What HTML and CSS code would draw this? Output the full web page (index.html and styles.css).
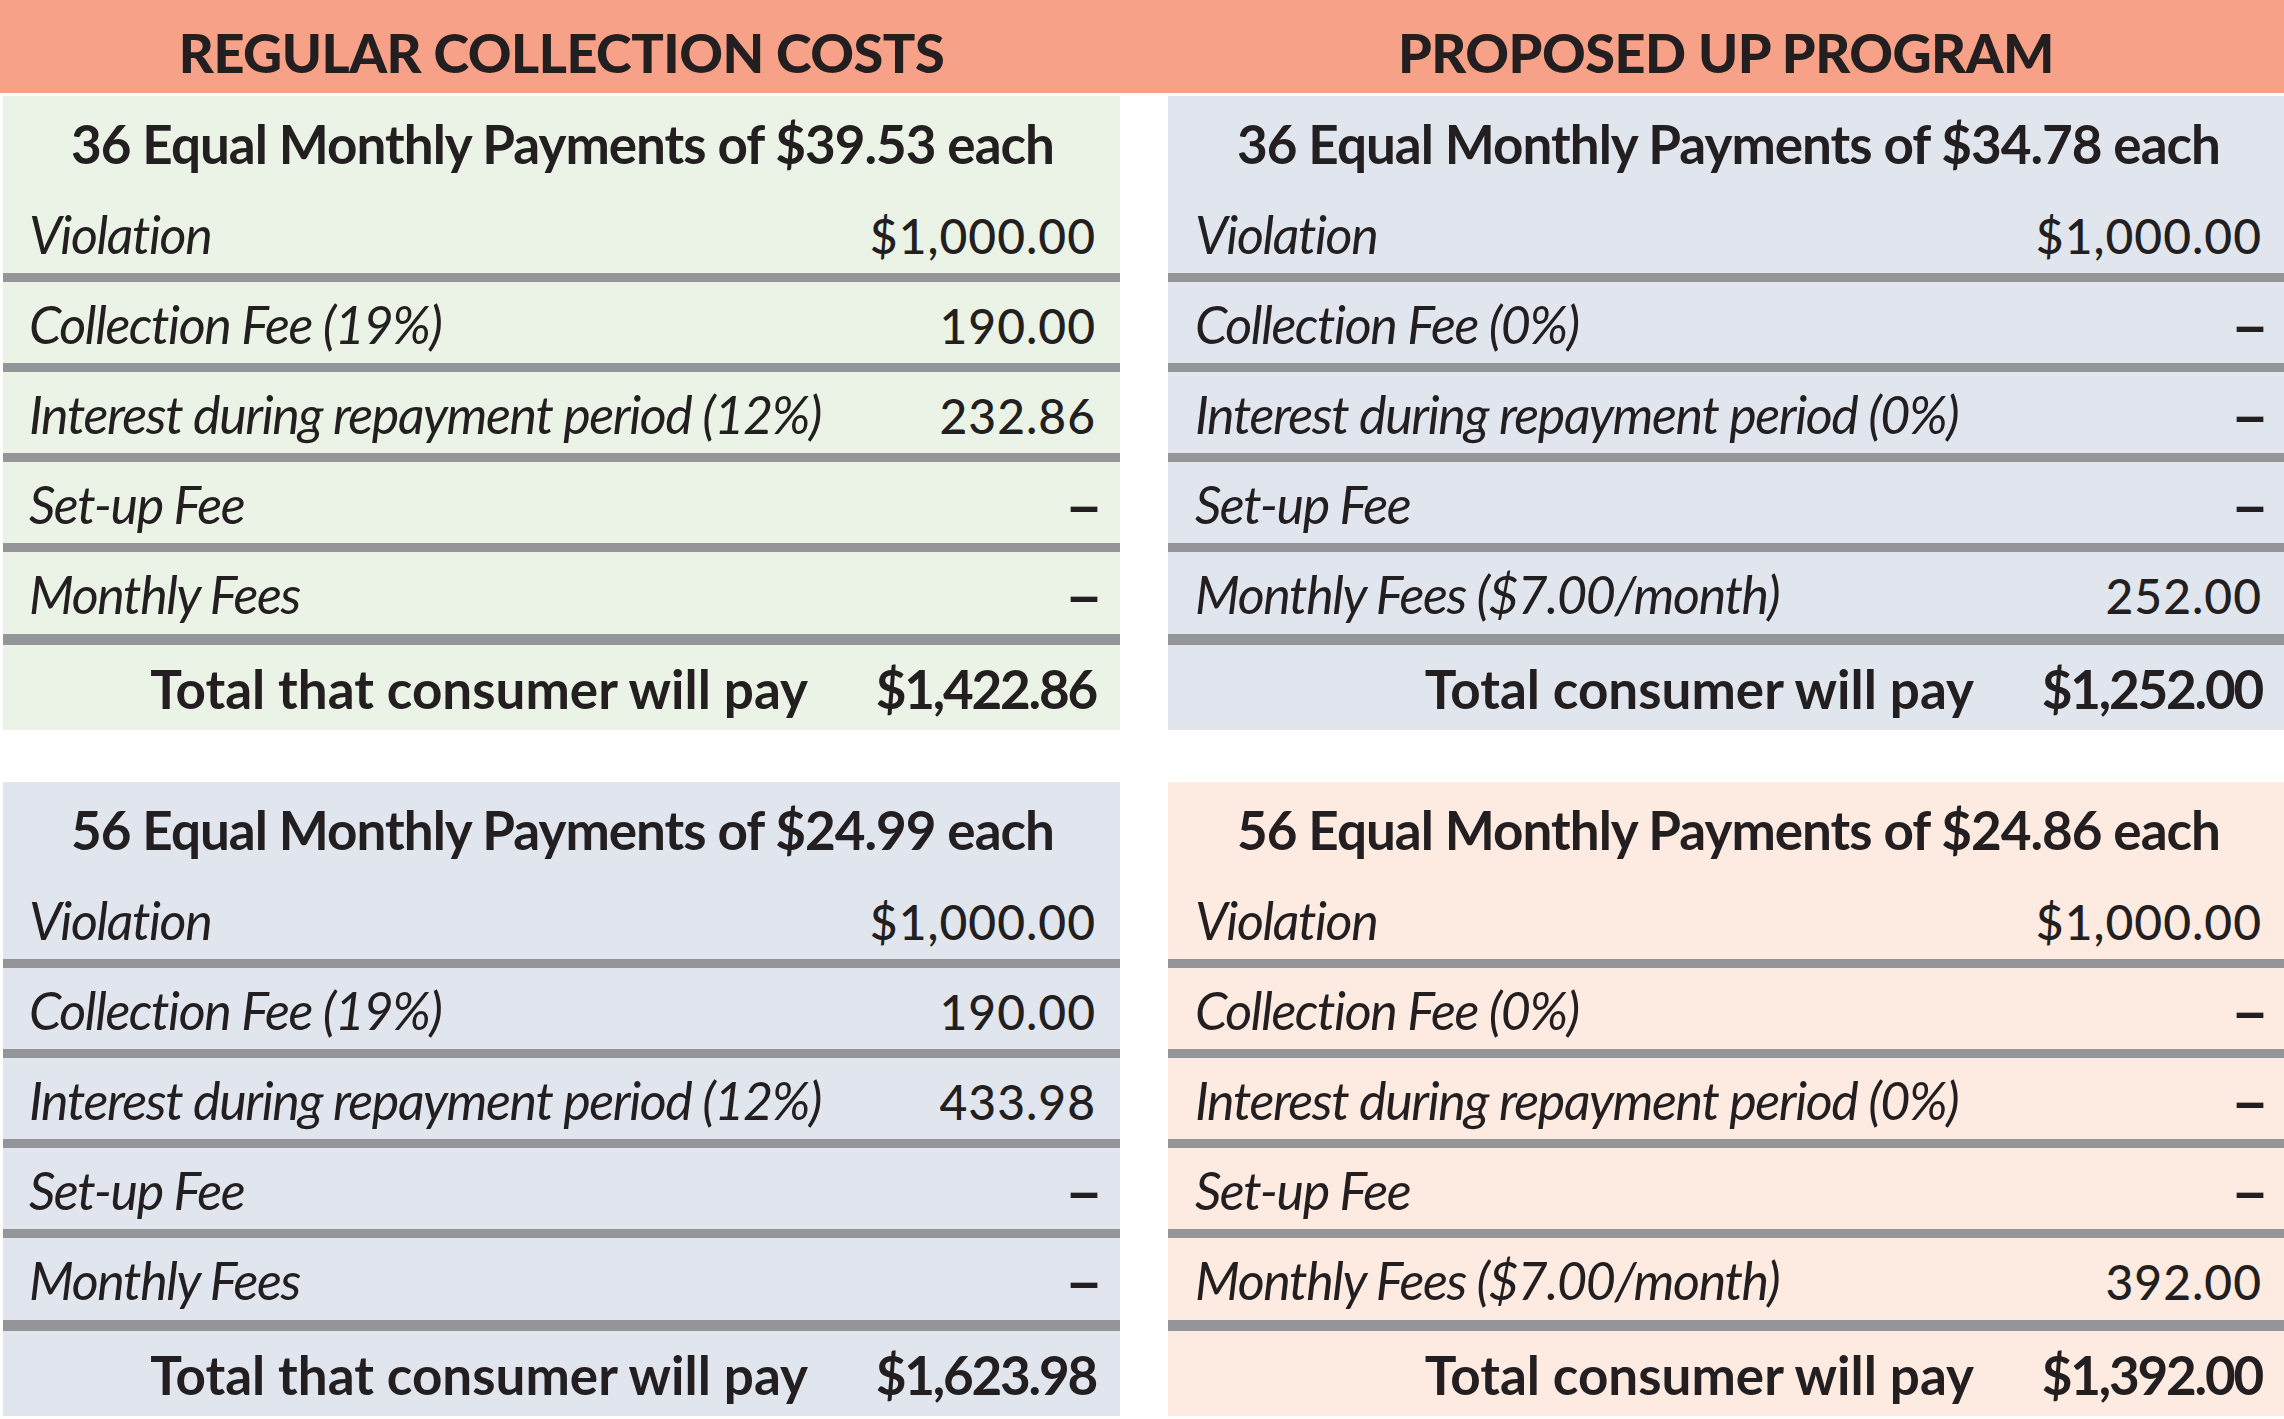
FILE: index.html
```html
<!DOCTYPE html>
<html lang="en">
<head>
<meta charset="utf-8">
<title>Collection Costs Comparison</title>
<link rel="stylesheet" href="styles.css">
</head>
<body>
<header class="head">
  <div class="head-inner">
    <h1 class="head-title">REGULAR COLLECTION COSTS</h1>
    <h1 class="head-title">PROPOSED UP PROGRAM</h1>
  </div>
</header>
<main class="grid">
  <section class="panel green">
    <h2 class="title">36 Equal Monthly Payments of $39.53 each</h2>
    <div class="row"><span class="label">Violation</span><span class="val">$1,000.00</span></div>
    <div class="row"><span class="label">Collection Fee (19%)</span><span class="val">190.00</span></div>
    <div class="row"><span class="label">Interest during repayment period (12%)</span><span class="val">232.86</span></div>
    <div class="row"><span class="label">Set-up Fee</span><span class="val dash">–</span></div>
    <div class="row last"><span class="label">Monthly Fees</span><span class="val dash">–</span></div>
    <div class="total"><span class="tlabel">Total that consumer will pay</span><span class="tval">$1,422.86</span></div>
  </section>
  <section class="panel blue right">
    <h2 class="title">36 Equal Monthly Payments of $34.78 each</h2>
    <div class="row"><span class="label">Violation</span><span class="val">$1,000.00</span></div>
    <div class="row"><span class="label">Collection Fee (0%)</span><span class="val dash">–</span></div>
    <div class="row"><span class="label">Interest during repayment period (0%)</span><span class="val dash">–</span></div>
    <div class="row"><span class="label">Set-up Fee</span><span class="val dash">–</span></div>
    <div class="row last"><span class="label">Monthly Fees ($7.00/month)</span><span class="val">252.00</span></div>
    <div class="total"><span class="tlabel">Total consumer will pay</span><span class="tval">$1,252.00</span></div>
  </section>
  <section class="panel blue">
    <h2 class="title">56 Equal Monthly Payments of $24.99 each</h2>
    <div class="row"><span class="label">Violation</span><span class="val">$1,000.00</span></div>
    <div class="row"><span class="label">Collection Fee (19%)</span><span class="val">190.00</span></div>
    <div class="row"><span class="label">Interest during repayment period (12%)</span><span class="val">433.98</span></div>
    <div class="row"><span class="label">Set-up Fee</span><span class="val dash">–</span></div>
    <div class="row last"><span class="label">Monthly Fees</span><span class="val dash">–</span></div>
    <div class="total"><span class="tlabel">Total that consumer will pay</span><span class="tval">$1,623.98</span></div>
  </section>
  <section class="panel peach right">
    <h2 class="title">56 Equal Monthly Payments of $24.86 each</h2>
    <div class="row"><span class="label">Violation</span><span class="val">$1,000.00</span></div>
    <div class="row"><span class="label">Collection Fee (0%)</span><span class="val dash">–</span></div>
    <div class="row"><span class="label">Interest during repayment period (0%)</span><span class="val dash">–</span></div>
    <div class="row"><span class="label">Set-up Fee</span><span class="val dash">–</span></div>
    <div class="row last"><span class="label">Monthly Fees ($7.00/month)</span><span class="val">392.00</span></div>
    <div class="total"><span class="tlabel">Total consumer will pay</span><span class="tval">$1,392.00</span></div>
  </section>
</main>
</body>
</html>
```

FILE: styles.css
```css
* { box-sizing: border-box; }
html, body { margin: 0; padding: 0; background: #ffffff; }
body { font-family: Lato, "Liberation Sans", sans-serif; color: #231f20; width: 2284px; height: 1419px; overflow: hidden; }

.head { background: #f7a288; height: 93px; }
.head-inner { display: grid; grid-template-columns: 1117px 1fr; column-gap: 48px; padding-left: 3px; }
.head-title { margin: 0; text-align: center; font-weight: 900; font-size: 54px; line-height: 80px; padding-top: 13px; letter-spacing: -0.5px; }

.grid { display: grid; grid-template-columns: 1117px 1fr; column-gap: 48px; row-gap: 52px; padding-left: 3px; padding-top: 3px; }

.panel { height: 634px; padding: 0 24px 0 26px; }
.panel.right { padding: 0 22px 0 27px; }
.green { background: #ebf3e6; }
.blue { background: #e0e5ee; }
.peach { background: #fdeae0; }

.title { margin: 0; height: 96px; line-height: 96px; text-align: center; font-weight: 700; font-size: 53px; letter-spacing: -1px; white-space: nowrap; }

.row { display: flex; justify-content: space-between; align-items: baseline; height: 90px; border-bottom: 9px solid #939598; margin: 0 -24px 0 -26px; padding: 4px 24px 0 26px; line-height: 77px; }
.right .row { margin: 0 -22px 0 -27px; padding: 4px 22px 0 27px; }
.row.last { height: 93px; border-bottom-width: 11px; }

.label { font-style: italic; font-size: 52px; letter-spacing: -1.4px; white-space: nowrap; }
.val { font-size: 48px; font-weight: 500; letter-spacing: 1px; }
.val.dash { font-family: "Liberation Sans", Arial, sans-serif; font-weight: 700; font-size: 54px; letter-spacing: 0; margin-right: -3px; }

.total { display: flex; justify-content: flex-end; align-items: baseline; height: 85px; padding-top: 3px; line-height: 82px; font-weight: 700; font-size: 53px; }
.tlabel { letter-spacing: 0; }
.tval { width: 288px; text-align: right; letter-spacing: -2.2px; }
```
